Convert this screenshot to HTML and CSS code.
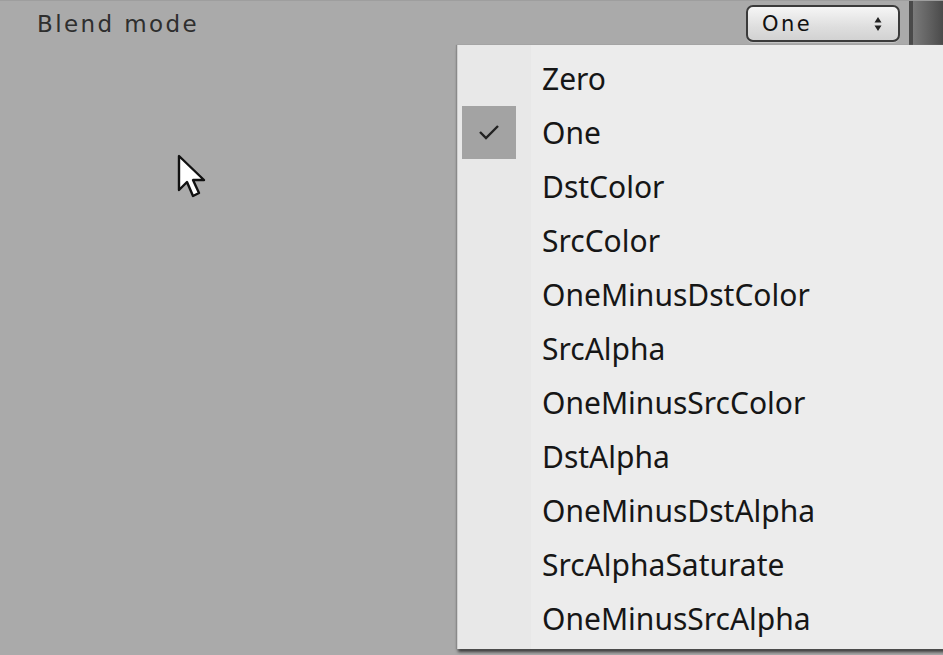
FILE: index.html
```html
<!DOCTYPE html>
<html>
<head>
<meta charset="utf-8">
<link rel="stylesheet" href="styles.css">
</head>
<body>
<div class="inspector">
  <div class="row">
    <span class="label">Blend mode</span>
    <div class="popup">
      <span class="popup-text">One</span>
      <svg class="popup-arrows" width="8" height="16" viewBox="0 0 8 16"><path d="M4 1 L7.5 6.5 L0.5 6.5 Z M0.5 9.5 L7.5 9.5 L4 15 Z" fill="#222"/></svg>
    </div>
    <div class="divider"></div>
    <div class="scroll"></div>
  </div>
  <svg class="cursor" width="34" height="50" viewBox="0 0 34 50">
    <path d="M3 2 L3 36 L11 28 L17 42 L23 39 L17 26 L28 26 Z" fill="#fff" stroke="#111" stroke-width="2.4" stroke-linejoin="round"/>
  </svg>
</div>
<div class="menu">
  <div class="item"><span class="mark"></span><span class="text">Zero</span></div>
  <div class="item checked"><span class="mark"><svg width="22" height="16" viewBox="0 0 22 16"><path d="M2 8 L8 14 L20 2" fill="none" stroke="#222" stroke-width="2.4"/></svg></span><span class="text">One</span></div>
  <div class="item"><span class="mark"></span><span class="text">DstColor</span></div>
  <div class="item"><span class="mark"></span><span class="text">SrcColor</span></div>
  <div class="item"><span class="mark"></span><span class="text">OneMinusDstColor</span></div>
  <div class="item"><span class="mark"></span><span class="text">SrcAlpha</span></div>
  <div class="item"><span class="mark"></span><span class="text">OneMinusSrcColor</span></div>
  <div class="item"><span class="mark"></span><span class="text">DstAlpha</span></div>
  <div class="item"><span class="mark"></span><span class="text">OneMinusDstAlpha</span></div>
  <div class="item"><span class="mark"></span><span class="text">SrcAlphaSaturate</span></div>
  <div class="item"><span class="mark"></span><span class="text">OneMinusSrcAlpha</span></div>
</div>
</body>
</html>
```
FILE: styles.css
```css
html, body {
  margin: 0;
  padding: 0;
}
body {
  width: 943px;
  height: 655px;
  overflow: hidden;
  background: #aaaaaa;
  position: relative;
}
.inspector {
  height: 655px;
  border-top: 1px solid #9e9e9e;
  box-sizing: border-box;
}
.row {
  display: flex;
  align-items: flex-start;
  height: 44px;
}
.label {
  font-family: "DejaVu Sans", sans-serif;
  font-size: 23px;
  letter-spacing: 2.4px;
  color: #2e2e2e;
  padding-left: 37px;
  padding-top: 10px;
}
.popup {
  margin-left: auto;
  margin-top: 4px;
  width: 154px;
  height: 37px;
  box-sizing: border-box;
  border: 2px solid #3a3a3a;
  border-radius: 7px;
  background: linear-gradient(#f6f6f6, #dedede 60%, #d2d2d2);
  display: flex;
  align-items: center;
  padding: 0 16px 0 14px;
  box-shadow: 0 1px 0 #c4c4c4;
}
.popup-text {
  font-family: "DejaVu Sans", sans-serif;
  font-size: 21px;
  font-weight: 500;
  letter-spacing: 2.5px;
  color: #111;
  flex: 1;
}
.popup-arrows {
  display: block;
}
.divider {
  width: 4px;
  height: 44px;
  margin-left: 9px;
  background: #4a4a4a;
}
.scroll {
  width: 30px;
  height: 44px;
  background: linear-gradient(to right, #7a7a7a, #5e5e5e 60%, #4a4a4a);
}
.cursor {
  position: absolute;
  left: 176px;
  top: 154px;
}
.menu {
  position: absolute;
  left: 457px;
  top: 45px;
  width: 500px;
  height: 604px;
  box-sizing: border-box;
  background: linear-gradient(to right, #e8e8e8 0, #e8e8e8 73px, #ececec 73px);
  border-left: 1px solid #d0d0d0;
  box-shadow: -1px 0 1px #8a8a8a, 0 4px 3px -1px #3a3a3a;
  padding-top: 6px;
}
.item {
  display: flex;
  align-items: center;
  height: 54px;
}
.mark {
  width: 54px;
  height: 53px;
  margin-left: 4px;
  margin-right: 26px;
  display: flex;
  align-items: center;
  justify-content: center;
}
.checked .mark {
  background: #a3a3a3;
}
.text {
  font-family: "Noto Sans", sans-serif;
  font-size: 30px;
  color: #161616;
}
```
